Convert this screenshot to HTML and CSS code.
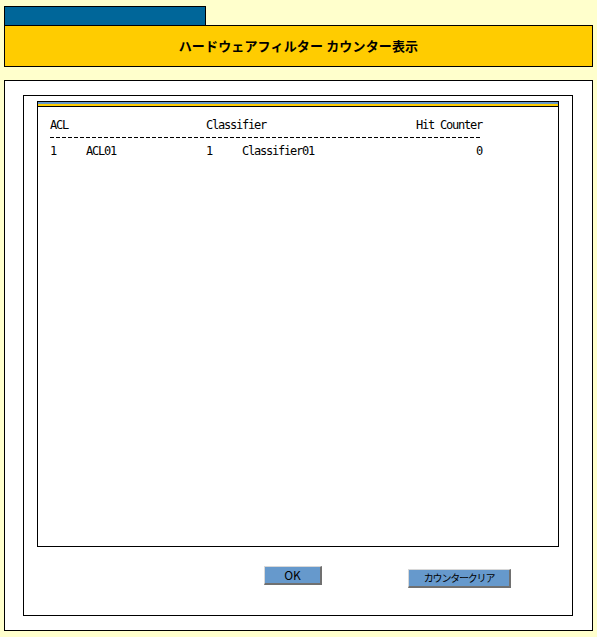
FILE: index.html
```html
<!DOCTYPE html>
<html lang="ja">
<head>
    <meta charset="UTF-8">
    <title>ハードウェアフィルター カウンター表示</title>
    <link rel="stylesheet" href="styles.css">
</head>
<body>
    <!-- Cabecera con pestaña -->
    <div class="tab"></div>
    <div class="header">ハードウェアフィルター カウンター表示</div>

    <div class="outer">
        <div class="inner">
            <div class="panel">
                <div class="stripe"></div>
                <div class="counter-table">
                    <span class="span2">ACL</span>
                    <span class="span2">Classifier</span>
                    <span class="num">Hit Counter</span>
                    <div class="dashes"></div>
                    <span>1</span>
                    <span>ACL01</span>
                    <span>1</span>
                    <span>Classifier01</span>
                    <span class="num">0</span>
                </div>
            </div>
            <div class="buttons">
                <button type="button" class="btn btn-ok">OK</button>
                <button type="button" class="btn btn-clear">カウンタークリア</button>
            </div>
        </div>
    </div>
</body>
</html>
```

FILE: styles.css
```css
/* Estilos generales */
body {
    margin: 0;
    background-color: #ffffcc;
    font-family: "Noto Sans CJK JP", "DejaVu Sans", sans-serif;
    color: #000;
}

.tab {
    width: 200px;
    height: 18px;
    margin: 6px 0 0 4px;
    background-color: #006699;
    border: 1px solid #000;
    border-bottom: none;
}

.header {
    height: 40px;
    margin: 0 4px;
    background-color: #ffcc00;
    border: 1px solid #000;
    font-size: 13px;
    font-weight: bold;
    letter-spacing: 0.15px;
    line-height: 40px;
    text-align: center;
}

/* Contenedores */
.outer {
    margin: 13px 4px 0 4px;
    height: 535px;
    padding: 14px 19px 0 18px;
    background-color: #fff;
    border: 1px solid #000;
}

.inner {
    height: 514px;
    border: 1px solid #000;
    padding: 5px 13px 0 13px;
}

.panel {
    height: 445px;
    border: 1px solid #000;
    border-top: none;
}

.stripe {
    height: 2px;
    border-top: 1px solid #000;
    border-bottom: 2px solid #ffcc00;
    background-color: #6699cc;
    box-shadow: 0 1px 0 #000;
}

/* Tabla de contadores */
.counter-table {
    display: grid;
    grid-template-columns: 36px 120px 36px 1fr auto;
    width: 432px;
    margin: 12px 0 0 12px;
    font-family: "DejaVu Sans Mono", "Liberation Mono", monospace;
    font-size: 12px;
    letter-spacing: -1.22px;
    line-height: 15px;
    white-space: pre;
}

.span2 {
    grid-column: span 2;
}

.num {
    text-align: right;
}

.dashes {
    grid-column: 1 / -1;
    height: 1px;
    margin: 4px 0 6px 0;
    background: repeating-linear-gradient(to right, #000 0 4px, transparent 4px 6px);
}

/* Botones */
.buttons {
    display: flex;
    align-items: flex-start;
    gap: 86px;
    padding: 19px 0 0 227px;
}

.btn {
    height: 19px;
    padding: 0;
    background-color: #6699cc;
    border-style: solid;
    border-width: 1px 2px 2px 1px;
    border-color: #d8d8d8 #707070 #707070 #d8d8d8;
    font-family: "Noto Sans CJK JP", sans-serif;
    font-size: 12px;
    line-height: 14px;
    color: #000;
}

.btn-ok {
    width: 58px;
}

.btn-clear {
    width: 103px;
    margin-top: 3px;
    font-size: 10px;
    letter-spacing: -1.2px;
}
```
